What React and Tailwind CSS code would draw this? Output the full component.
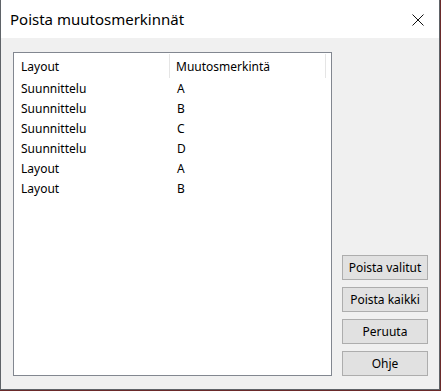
export default function App() {
  const rows = [
    ["Suunnittelu", "A"],
    ["Suunnittelu", "B"],
    ["Suunnittelu", "C"],
    ["Suunnittelu", "D"],
    ["Layout", "A"],
    ["Layout", "B"],
  ];
  const font = { fontFamily: '"Noto Sans", "Open Sans", sans-serif' };
  return (
    <div className="w-[441px] h-[391px] bg-[#6a2a2a]">
      <div
        className="w-[440px] h-[390px] border-x border-b border-[#5f6368] bg-[#f0f0f0] flex flex-col text-[#000]"
        style={font}
      >
        <div className="h-[38px] bg-white flex items-center justify-between pl-[9px] pr-[15px]">
          <span className="text-[15px] leading-none mt-[1px]">Poista muutosmerkinnät</span>
          <svg width="12" height="12" viewBox="0 0 12 12" className="mt-[1px]">
            <path d="M0.5 0.5 L11.5 11.5 M11.5 0.5 L0.5 11.5" stroke="#111" strokeWidth="1" />
          </svg>
        </div>
        <div className="flex-1 flex pl-[12px] pt-[14px] pb-[13px]">
          <div className="w-[319px] h-full border border-[#828790] bg-white flex flex-col">
            <div className="h-[26px] flex text-[12px]">
              <div className="w-[156px] h-[24px] flex items-center pl-[7px] border-r border-[#e5e5e5] mt-[1px]">
                <span className="pt-[2px]">Layout</span>
              </div>
              <div className="w-[156px] h-[24px] flex items-center pl-[6px] border-r border-[#e5e5e5] mt-[1px]">
                <span className="pt-[2px]">Muutosmerkintä</span>
              </div>
            </div>
            {rows.map((r, i) => (
              <div key={i} className="h-[20px] flex items-center text-[12px]">
                <div className="w-[157px] pl-[7px]">{r[0]}</div>
                <div className="pl-[6px]">{r[1]}</div>
              </div>
            ))}
          </div>
          <div className="ml-[10px] w-[86px] flex flex-col justify-end gap-[7px]">
            {["Poista valitut", "Poista kaikki", "Peruuta", "Ohje"].map((b) => (
              <div
                key={b}
                className="h-[25px] border border-[#adadad] bg-[#e1e1e1] flex items-center justify-center text-[12px]"
              >
                {b}
              </div>
            ))}
          </div>
        </div>
      </div>
    </div>
  );
}
